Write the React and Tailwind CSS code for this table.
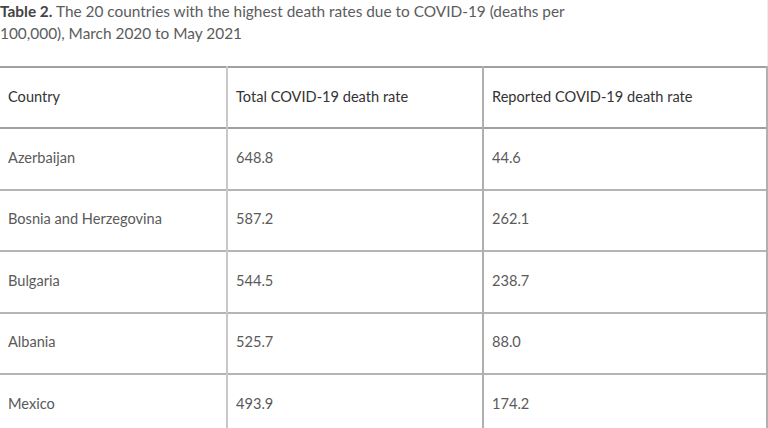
import React from 'react';

const rows = [
  ['Azerbaijan', '648.8', '44.6'],
  ['Bosnia and Herzegovina', '587.2', '262.1'],
  ['Bulgaria', '544.5', '238.7'],
  ['Albania', '525.7', '88.0'],
  ['Mexico', '493.9', '174.2'],
];

export default function App() {
  return (
    <div className="h-[428px] w-[768px] overflow-hidden bg-white font-['Lato','Liberation_Sans',sans-serif]">
      <div className="border-r border-[#eeeeee] pb-[22px]">
        <p className="max-w-[575px] text-[15.4px] leading-[22px] text-[#5c5c5c]">
          <span className="font-bold text-[#444]">Table 2.</span> The 20 countries with the highest death rates due to COVID-19 (deaths per 100,000), March 2020 to May 2021
        </p>
      </div>
      <table className="w-[768px] table-fixed border-collapse text-[14.6px]">
        <colgroup>
          <col className="w-[227px]" />
          <col className="w-[256px]" />
          <col />
        </colgroup>
        <thead>
          <tr className="h-[61px] border-t-2 border-b-2 border-[#a0a0a0]">
            <th className="px-2 pb-[2px] text-left font-normal text-[#333]">Country</th>
            <th className="border-l-2 border-[#c8c8c8] px-2 pb-[2px] text-left font-normal text-[#333]">Total COVID-19 death rate</th>
            <th className="border-l-2 border-r-2 border-[#b0b0b0] px-2 pb-[2px] text-left font-normal text-[#333]">Reported COVID-19 death rate</th>
          </tr>
        </thead>
        <tbody>
          {rows.map((r) => (
            <tr key={r[0]} className="h-[61.5px] border-b-2 border-[#b4b4b4]">
              <td className="px-2 pb-[2px] text-[#5a5a5a]">{r[0]}</td>
              <td className="border-l-2 border-[#c8c8c8] px-2 pb-[2px] text-[#5a5a5a]">{r[1]}</td>
              <td className="border-l-2 border-r-2 border-[#b0b0b0] px-2 pb-[2px] text-[#5a5a5a]">{r[2]}</td>
            </tr>
          ))}
        </tbody>
      </table>
    </div>
  );
}
